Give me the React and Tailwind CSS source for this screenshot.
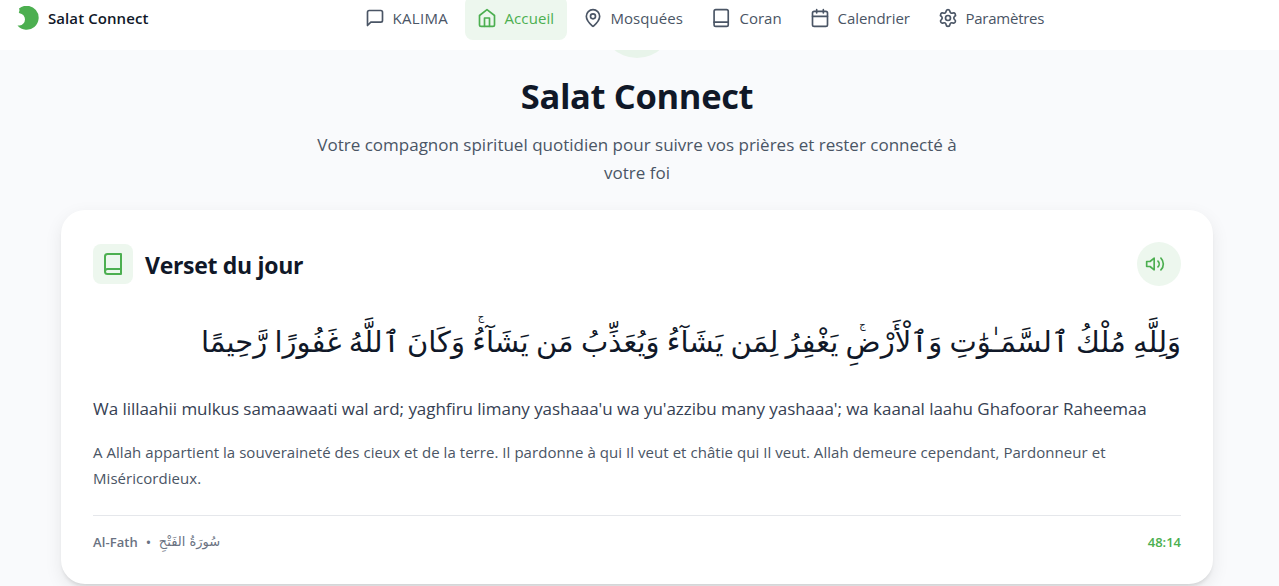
import React from "react";
import { MapPin, Settings } from "lucide-react";

const VERSE = {
  arabic: [
    "وَلِلَّهِ مُلْكُ ٱلسَّمَـٰوَٰتِ وَٱلْأَرْضِ",
    " يَغْفِرُ لِمَن يَشَآءُ وَيُعَذِّبُ مَن يَشَآءُ",
    " وَكَانَ ٱللَّهُ غَفُورًا رَّحِيمًا",
  ],
  transliteration:
    "Wa lillaahii mulkus samaawaati wal ard; yaghfiru limany yashaaa'u wa yu'azzibu many yashaaa'; wa kaanal laahu Ghafoorar Raheemaa",
  translation:
    "A Allah appartient la souveraineté des cieux et de la terre. Il pardonne à qui Il veut et châtie qui Il veut. Allah demeure cependant, Pardonneur et Miséricordieux.",
};

const Icon = ({ children, className = "size-5" }) => (
  <svg
    viewBox="0 0 24 24"
    fill="none"
    stroke="currentColor"
    strokeWidth={2}
    strokeLinecap="round"
    strokeLinejoin="round"
    className={`shrink-0 ${className}`}
  >
    {children}
  </svg>
);

const MessageIcon = () => (
  <Icon>
    <path d="M21 15a2 2 0 0 1-2 2H7l-4 4V5a2 2 0 0 1 2-2h14a2 2 0 0 1 2 2z" />
  </Icon>
);

const HomeIcon = () => (
  <Icon>
    <path d="m3 9 9-7 9 7v11a2 2 0 0 1-2 2H5a2 2 0 0 1-2-2z" />
    <path d="M9 22V12h6v10" />
  </Icon>
);

const BookIcon = ({ className }) => (
  <Icon className={className}>
    <path d="M4 19.5A2.5 2.5 0 0 1 6.5 17H20" />
    <path d="M6.5 2H20v20H6.5A2.5 2.5 0 0 1 4 19.5v-15A2.5 2.5 0 0 1 6.5 2z" />
  </Icon>
);

const CoranIcon = () => (
  <Icon>
    <rect x="2.5" y="2" width="17" height="20" rx="2" />
    <path d="M2.5 17h17" />
  </Icon>
);

const CalendarIcon = () => (
  <Icon>
    <rect x="3" y="4" width="18" height="18" rx="2" />
    <path d="M16 2v4M8 2v4M3 10h18" />
  </Icon>
);

const NAV_ITEMS = [
  { label: "KALIMA", icon: <MessageIcon />, className: "w-[108px] tracking-[0.3px]" },
  { label: "Accueil", icon: <HomeIcon />, className: "w-[102px] tracking-[0.1px]", active: true },
  { label: "Mosquées", icon: <MapPin size={20} className="shrink-0" />, className: "w-[125px] tracking-[0.05px]" },
  { label: "Coran", icon: <CoranIcon />, className: "w-[94px]" },
  { label: "Calendrier", icon: <CalendarIcon />, className: "w-[124px] tracking-[-0.05px]" },
  { label: "Paramètres", icon: <Settings size={20} className="shrink-0" />, className: "w-[130px] tracking-[-0.25px]" },
];

const Header = () => (
  <header className="relative z-10 flex h-[50px] items-start bg-white">
    <div className="flex h-9 w-[353px] shrink-0 items-center gap-2 pl-4">
      <svg viewBox="0 0 24 24" className="size-6 shrink-0 text-[#4caf50]">
        <path
          fill="currentColor"
          d="M3 2.5A12 12 0 1 1 1.5 19.5H3.5A6.2 6.2 0 0 0 3.6 7.2L2.8 6.5Q4 4.5 3 2.5Z"
        />
      </svg>
      <span className="whitespace-nowrap text-[15px] font-semibold tracking-[0.08px] text-gray-900">
        Salat Connect
      </span>
    </div>
    <nav className="flex gap-1">
      {NAV_ITEMS.map(({ label, icon, className, active }) => (
        <a
          key={label}
          href="#"
          className={`-mt-1 flex h-11 items-center gap-[7.5px] whitespace-nowrap rounded-lg px-3 text-[15px] ${className} ${
            active ? "bg-[#edf7ee] text-[#4caf50]" : "text-gray-600"
          }`}
        >
          {icon}
          <span>{label}</span>
        </a>
      ))}
    </nav>
  </header>
);

const Hero = () => (
  <section className="flex flex-col items-center pr-[5px] text-center">
    <div className="-mt-16 size-18 rounded-full bg-[#e8f4ea]" />
    <h1 className="mt-[18px] text-[34.5px] font-bold leading-10 tracking-[-0.35px] text-gray-900">
      Salat Connect
    </h1>
    <p className="mt-[15px] w-[672px] text-[17px] leading-7 text-gray-600">
      Votre compagnon spirituel quotidien pour suivre vos prières et rester connecté à
      <br />
      votre foi
    </p>
  </section>
);

// small high jeem, drawn above the last letter without taking any width
const PauseMark = ({ className }) => (
  <span className="relative inline-block w-0">
    <span className={`absolute text-[10px] leading-none ${className}`}>ج</span>
  </span>
);

const DailyVerse = () => (
  <section className="ml-[61px] mt-[23px] h-[374px] w-[1152px] rounded-3xl bg-white px-8 pt-8 shadow-[0_6px_18px_rgba(0,0,0,0.08),0_4px_4px_-2px_rgba(0,0,0,0.12)]">
    <div className="flex h-11 items-center justify-between">
      <div className="flex items-center gap-3">
        <div className="flex size-10 items-center justify-center rounded-lg bg-[#edf7ee] text-[#4caf50]">
          <BookIcon className="size-6" />
        </div>
        <h2 className="pt-0.5 text-[23px] font-bold leading-8 tracking-[-0.3px] text-gray-900">
          Verset du jour
        </h2>
      </div>
      <button
        type="button"
        aria-label="Écouter"
        className="flex size-11 items-center rounded-full bg-[#edf7ee] pl-2 text-[#4caf50]"
      >
        <Icon>
          <path d="M11 5 6 9H2v6h4l5 4z" />
          <path d="M15.54 8.46a5 5 0 0 1 0 7.07M19.07 4.93a10 10 0 0 1 0 14.14" />
        </Icon>
      </button>
    </div>

    <p
      dir="rtl"
      lang="ar"
      className="mt-6 h-[60px] whitespace-nowrap pt-0.5 font-['DejaVu_Sans',sans-serif] text-[29px] leading-[60px] [word-spacing:-1.9px] text-gray-900"
    >
      {VERSE.arabic[0]}
      <PauseMark className="-top-8 right-[-20px]" />
      {VERSE.arabic[1]}
      <PauseMark className="-top-10 right-[-12px]" />
      {VERSE.arabic[2]}
    </p>
    <p className="mt-6 whitespace-nowrap text-[17px] leading-[29px] tracking-[-0.05px] text-gray-700">
      {VERSE.transliteration}
    </p>
    <p className="mt-4 text-[15px] leading-[26px] tracking-[0.05px] text-gray-600">
      {VERSE.translation}
    </p>

    <div className="mt-6 flex items-center justify-between border-t border-gray-200 pt-4 text-[13px] font-semibold leading-5">
      <div className="flex gap-2 text-gray-500">
        <span className="tracking-[0.1px]">Al-Fath</span>
        <span>•</span>
        <span lang="ar" className="font-['DejaVu_Sans',sans-serif] font-normal">
          سُورَةُ الفَتْحِ
        </span>
      </div>
      <span className="text-[#4caf50]">48:14</span>
    </div>
  </section>
);

const App = () => (
  <div className="h-[586px] overflow-hidden bg-[#f9fafc] font-['Open_Sans','Noto_Sans',sans-serif]">
    <Header />
    <Hero />
    <DailyVerse />
  </div>
);

export default App;
